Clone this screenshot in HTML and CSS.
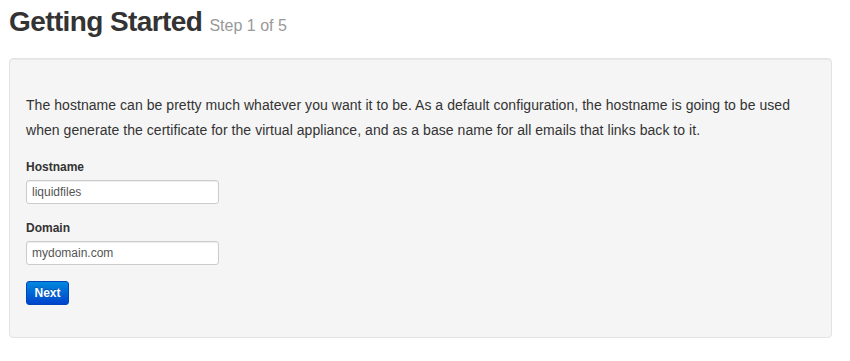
FILE: index.html
```html
<!DOCTYPE html>
<html lang="en">
<head>
    <meta charset="UTF-8">
    <title>Getting Started</title>
    <link rel="stylesheet" href="styles.css">
</head>
<body>
    <h1>Getting Started <small>Step 1 of 5</small></h1>

    <div class="well">
        <p>The hostname can be pretty much whatever you want it to be. As a default configuration, the hostname is going to be used when generate the certificate for the virtual appliance, and as a base name for all emails that links back to it.</p>

        <form>
            <label for="hostname">Hostname</label>
            <input type="text" id="hostname" value="liquidfiles">

            <label for="domain">Domain</label>
            <input type="text" id="domain" value="mydomain.com">

            <button type="button" class="btn-primary">Next</button>
        </form>
    </div>
</body>
</html>
```

FILE: styles.css
```css
body {
    font-family: "Liberation Sans", Helvetica, Arial, sans-serif;
    color: #333;
    margin: 0;
    padding: 0 18px 0 9px;
    background: #fff;
}
h1 {
    font-size: 28px;
    line-height: 40px;
    margin: 2px 0 12px;
    font-weight: bold;
    color: #333;
    letter-spacing: -0.6px;
}
h1 small {
    font-size: 16px;
    font-weight: normal;
    color: #999;
    letter-spacing: 0;
}
.well {
    background: #f5f5f5;
    border: 1px solid #e3e3e3;
    border-radius: 4px;
    box-shadow: inset 0 1px 1px rgba(0, 0, 0, 0.05);
    padding: 34px 16px 32px;
}
.well p {
    font-size: 14px;
    line-height: 25px;
    letter-spacing: 0.05px;
    margin: 0 0 15px;
}
form label {
    display: block;
    font-size: 12px;
    font-weight: bold;
    line-height: 18px;
    margin-bottom: 4px;
}
form input {
    display: block;
    box-sizing: border-box;
    width: 193px;
    height: 24px;
    padding: 3px 5px;
    font-family: inherit;
    font-size: 12px;
    color: #555;
    background: #fff;
    border: 1px solid #ccc;
    border-radius: 3px;
    box-shadow: inset 0 1px 1px rgba(0, 0, 0, 0.075);
    margin: 0 0 15px;
}
.btn-primary {
    display: block;
    margin-top: 16px;
    height: 24px;
    width: 43px;
    padding: 0;
    font-family: inherit;
    font-size: 12px;
    font-weight: bold;
    color: #fff;
    text-shadow: 0 -1px 0 rgba(0, 0, 0, 0.25);
    background: linear-gradient(#0088dd, #0044cc);
    border: 1px solid #0046b8;
    border-radius: 3px;
}
```
